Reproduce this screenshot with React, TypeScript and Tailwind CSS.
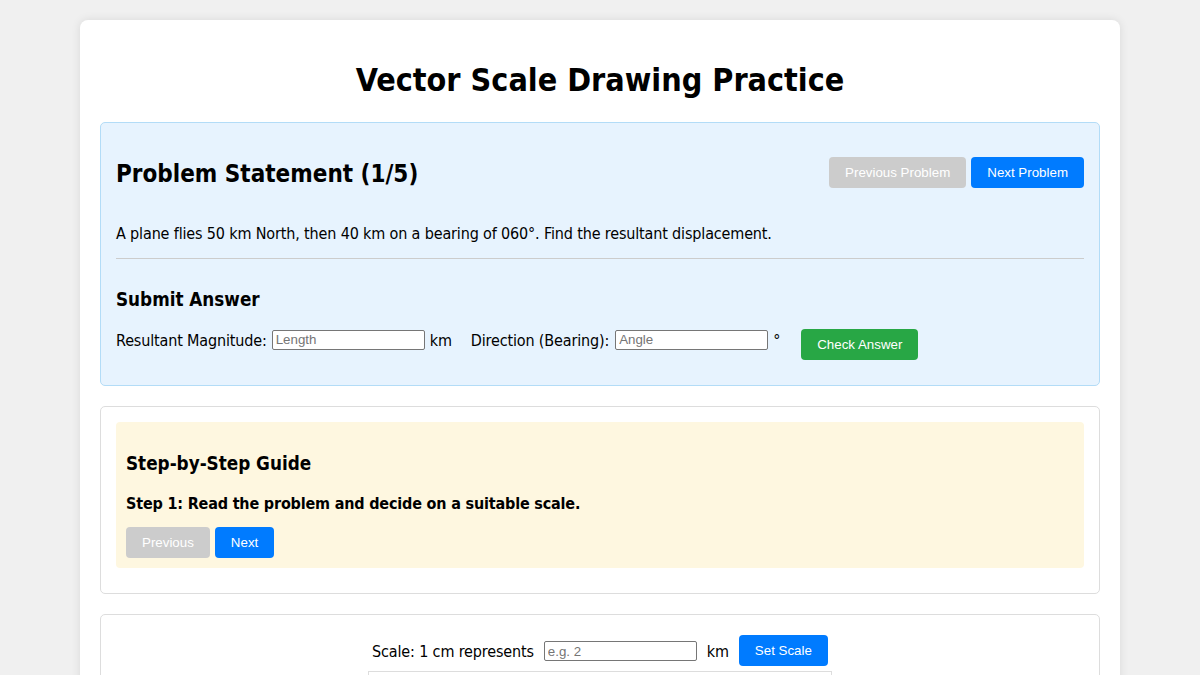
import React from "react";

const body = { fontFamily: '"DejaVu Sans Condensed", "DejaVu Sans", Verdana, sans-serif' } as React.CSSProperties;

function Btn({ children, color, className = "" }: { children: React.ReactNode; color: "gray" | "blue" | "green"; className?: string }) {
  const bg = color === "gray" ? "bg-[#cccccc]" : color === "blue" ? "bg-[#007bff]" : "bg-[#28a745]";
  return (
    <button
      className={`${bg} text-white rounded-[4px] px-4 h-[31px] text-[13.33px] leading-[15px] whitespace-nowrap tracking-normal ${className}`}
      style={{ fontFamily: '"Liberation Sans", Arial, sans-serif' }}
    >
      {children}
    </button>
  );
}

function Input({ placeholder }: { placeholder: string }) {
  return (
    <input
      placeholder={placeholder}
      className="w-[153px] h-[20px] border border-[#767676] rounded-[2px] px-[3px] text-[13.33px] tracking-normal bg-white placeholder:text-[#757575] outline-none"
      style={{ fontFamily: '"Liberation Sans", Arial, sans-serif' }}
    />
  );
}

export default function App() {
  return (
    <div className="min-h-[675px] bg-[#f0f0f0] pt-5 pb-5 text-black" style={body}>
      <div className="w-[1040px] mx-auto bg-white rounded-[8px] shadow-[0_0_10px_rgba(0,0,0,0.1)] px-5 pt-5 pb-5">
        <h1 className="text-[32px] font-bold text-center leading-[37px] mt-[22px] mb-[23px]">Vector Scale Drawing Practice</h1>

        <div className="bg-[#e7f3fe] border border-[#b3dcf7] rounded-[5px] px-[15px] pt-[15px] pb-[15px]">
          <div className="flex justify-between items-center h-[68px]">
            <h2 className="text-[24px] font-bold leading-[28px] pt-[4px]">Problem Statement (1/5)</h2>
            <div className="flex gap-[5px]">
              <Btn color="gray">Previous Problem</Btn>
              <Btn color="blue">Next Problem</Btn>
            </div>
          </div>
          <p className="mt-[18px] text-[16px] leading-[19px] tracking-[-0.15px]">
            A plane flies 50 km North, then 40 km on a bearing of 060°. Find the resultant displacement.
          </p>
          <div className="mt-[15px] h-px bg-[#cccccc]" />
          <h3 className="mt-[30px] text-[18.72px] font-bold leading-[22px]">Submit Answer</h3>
          <div className="mt-[17px] flex items-start h-[42px] text-[16px] tracking-[-0.15px]">
            <div className="flex items-center h-[22px]">
              <span className="pt-[4px]">Resultant Magnitude:</span>
              <span className="ml-[5px]"><Input placeholder="Length" /></span>
              <span className="ml-[5px] pt-[4px]">km</span>
              <span className="ml-[19px] pt-[4px]">Direction (Bearing):</span>
              <span className="ml-[6px]"><Input placeholder="Angle" /></span>
              <span className="ml-[5px] pt-[4px]">°</span>
            </div>
            <Btn color="green" className="ml-[21px] mt-[1px]">Check Answer</Btn>
          </div>
        </div>

        <div className="mt-5 border border-[#dddddd] rounded-[5px] p-[15px] pb-[25px]">
          <div className="bg-[#fef7e0] rounded-[4px] p-[10px]">
            <h3 className="mt-[21px] text-[18.72px] font-bold leading-[22px]">Step-by-Step Guide</h3>
            <p className="mt-[19px] text-[16px] font-bold leading-[19px] tracking-[-0.18px]">Step 1: Read the problem and decide on a suitable scale.</p>
            <div className="mt-[14px] flex gap-[5px]">
              <Btn color="gray">Previous</Btn>
              <Btn color="blue">Next</Btn>
            </div>
          </div>
        </div>

        <div className="mt-5 border border-[#dddddd] rounded-[5px] pt-5 pb-5">
          <div className="flex justify-center items-center text-[16px] tracking-[-0.15px]">
            <span className="pt-[2px]">Scale: 1 cm represents</span>
            <span className="ml-[10px]"><Input placeholder="e.g. 2" /></span>
            <span className="ml-[10px] pt-[2px]">km</span>
            <Btn color="blue" className="ml-[10px]">Set Scale</Btn>
          </div>
          <div className="mx-auto mt-[5px] w-[464px] h-[400px] border border-[#dddddd] bg-white" />
        </div>
      </div>
    </div>
  );
}
